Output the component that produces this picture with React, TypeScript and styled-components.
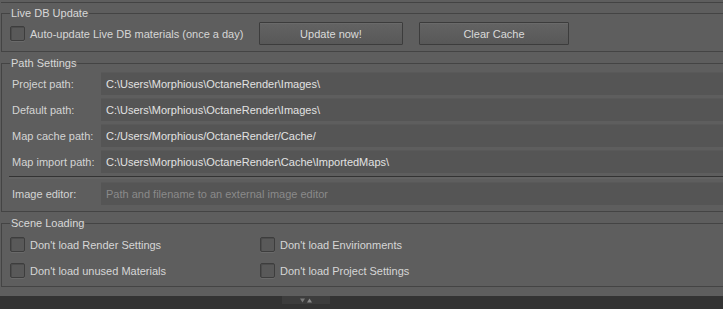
import styled, { createGlobalStyle } from "styled-components";

const GlobalStyle = createGlobalStyle`
	html, body {
		margin: 0;
		padding: 0;
		background: #5e5e5e;
		overflow: hidden;
	}
	* {
		box-sizing: border-box;
	}
`;

const Panel = styled.div`
	width: 723px;
	height: 309px;
	display: flex;
	flex-direction: column;
	background: #5e5e5e;
	font-family: "Liberation Sans", Arial, sans-serif;
	font-size: 11px;
	color: #d4d4d4;
	overflow: hidden;
`;

const TopEdge = styled.div`
	height: 3px;
	border-bottom: 1px solid #434343;
	margin-left: 1px;
	margin-right: -20px;
`;

const Group = styled.fieldset<{ $top: number; $pt: number; $pb: number }>`
	margin: ${(p) => p.$top}px -20px 0 1px;
	padding: ${(p) => p.$pt}px 8px ${(p) => p.$pb}px 8px;
	border: 1px solid #444444;
	min-width: 0;
`;

const Legend = styled.legend`
	padding: 0 1px;
	height: 14px;
	line-height: 14px;
	color: #d8d8d8;
`;

const UpdateRow = styled.div`
	display: grid;
	grid-template-columns: 233px 144px 150px;
	column-gap: 16px;
	align-items: center;
`;

const Check = styled.label`
	display: flex;
	align-items: center;
	gap: 5px;
	height: 15px;
	white-space: nowrap;
	color: #d6d6d6;
`;

const Box = styled.span`
	width: 15px;
	height: 15px;
	flex: none;
	border: 1px solid #3d3d3d;
	border-radius: 2px;
	background: #595959;
	box-shadow:
		inset 1px 1px 0 #4c4c4c,
		0 1px 0 #6a6a6a;
`;

const Button = styled.button`
	height: 23px;
	padding: 0;
	border: 1px solid #3c3c3c;
	border-radius: 1px;
	background: linear-gradient(#636363, #585858);
	color: #dadada;
	font-family: inherit;
	font-size: 11px;
	box-shadow: inset 0 1px 0 #6a6a6a;
`;

const PathList = styled.div`
	display: flex;
	flex-direction: column;
	gap: 3px;
	padding-left: 2px;
`;

const PathRow = styled.div`
	display: grid;
	grid-template-columns: 89px 1fr;
	align-items: center;
`;

const PathLabel = styled.span`
	color: #d4d4d4;
	white-space: nowrap;
`;

const Field = styled.div<{ $placeholder?: boolean }>`
	height: 23px;
	line-height: 22px;
	padding-left: 5px;
	background: #555555;
	border-top: 1px solid #595959;
	color: ${(p) => (p.$placeholder ? "#8a8a8a" : "#e2e2e2")};
	white-space: nowrap;
	overflow: hidden;
`;

const Divider = styled.div`
	height: 3px;
	margin-left: -3px;
	border-top: 1px solid #333333;
	background: #636363;
`;

const SceneGrid = styled.div`
	display: grid;
	grid-template-columns: 250px 1fr;
	row-gap: 11px;
`;

const BottomBar = styled.div`
	margin-top: auto;
	height: 13px;
	flex: none;
	background: #333333;
	display: flex;
	align-items: flex-start;
	padding-left: 282px;
`;

const Handle = styled.div`
	width: 48px;
	height: 8px;
	background: #3d3d3d;
	display: flex;
	align-items: center;
	justify-content: center;
`;

const paths = [
	["Project path:", "C:\\Users\\Morphious\\OctaneRender\\Images\\"],
	["Default path:", "C:\\Users\\Morphious\\OctaneRender\\Images\\"],
	["Map cache path:", "C:/Users/Morphious/OctaneRender/Cache/"],
	["Map import path:", "C:\\Users\\Morphious\\OctaneRender\\Cache\\ImportedMaps\\"],
];

const scene = [
	"Don't load Render Settings",
	"Don't load Envirionments",
	"Don't load unused Materials",
	"Don't load Project Settings",
];

export default function App() {
	return (
		<>
			<GlobalStyle />
			<Panel>
				<TopEdge />
				<Group $top={3} $pt={2} $pb={6}>
					<Legend>Live DB Update</Legend>
					<UpdateRow>
						<Check>
							<Box />
							Auto-update Live DB materials (once a day)
						</Check>
						<Button>Update now!</Button>
						<Button>Clear Cache</Button>
					</UpdateRow>
				</Group>
				<Group $top={4} $pt={2} $pb={6}>
					<Legend>Path Settings</Legend>
					<PathList>
						{paths.map(([label, value]) => (
							<PathRow key={label}>
								<PathLabel>{label}</PathLabel>
								<Field>{value}</Field>
							</PathRow>
						))}
						<Divider />
						<PathRow>
							<PathLabel>Image editor:</PathLabel>
							<Field $placeholder>Path and filename to an external image editor</Field>
						</PathRow>
					</PathList>
				</Group>
				<Group $top={4} $pt={7} $pb={8}>
					<Legend>Scene Loading</Legend>
					<SceneGrid>
						{scene.map((s) => (
							<Check key={s}>
								<Box />
								{s}
							</Check>
						))}
					</SceneGrid>
				</Group>
				<BottomBar>
					<Handle>
						<svg width="14" height="5" viewBox="0 0 14 5">
							<path d="M1 0.5 L6 0.5 L3.5 4.5 Z" fill="#7a7a7a" />
							<path d="M8 4.5 L13 4.5 L10.5 0.5 Z" fill="#8a8a8a" />
						</svg>
					</Handle>
				</BottomBar>
			</Panel>
		</>
	);
}
